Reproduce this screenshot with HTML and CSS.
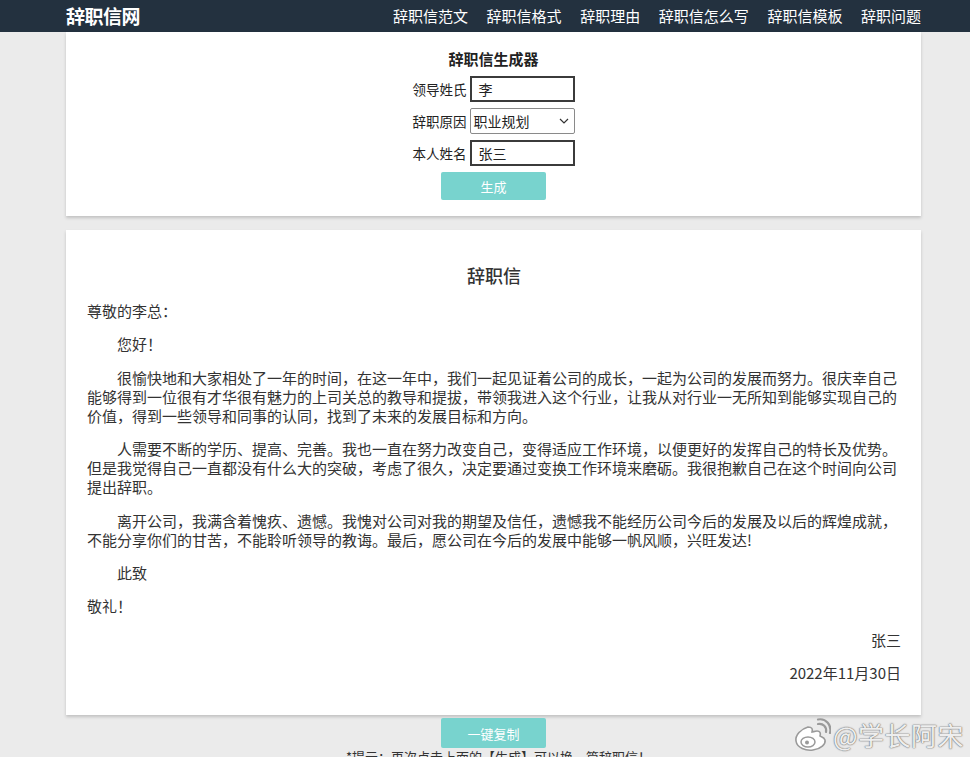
FILE: index.html
```html
<!DOCTYPE html>
<html lang="zh">
<head>
<meta charset="utf-8">
<title>辞职信网</title>
<link rel="stylesheet" href="styles.css">
</head>
<body>
<header class="topbar">
  <div class="topbar-inner">
    <div class="logo">辞职信网</div>
    <nav class="nav">
      <a>辞职信范文</a>
      <a>辞职信格式</a>
      <a>辞职理由</a>
      <a>辞职信怎么写</a>
      <a>辞职信模板</a>
      <a>辞职问题</a>
    </nav>
  </div>
</header>
<main class="wrap">
  <section class="card form-card">
    <h2 class="form-title">辞职信生成器</h2>
    <div class="row"><label>领导姓氏</label><div class="field input">李</div></div>
    <div class="row"><label>辞职原因</label><div class="field select">职业规划<svg class="caret" width="10" height="6" viewBox="0 0 10 6"><path d="M1 1 L5 5 L9 1" fill="none" stroke="#333" stroke-width="1.2"/></svg></div></div>
    <div class="row"><label>本人姓名</label><div class="field input">张三</div></div>
    <div class="btn-row"><button class="btn">生成</button></div>
  </section>
  <section class="card letter">
    <h1 class="letter-title">辞职信</h1>
    <p class="p-first">尊敬的李总：</p>
    <p class="ind">您好！</p>
    <p class="ind">很愉快地和大家相处了一年的时间，在这一年中，我们一起见证着公司的成长，一起为公司的发展而努力。很庆幸自己能够得到一位很有才华很有魅力的上司关总的教导和提拔，带领我进入这个行业，让我从对行业一无所知到能够实现自己的价值，得到一些领导和同事的认同，找到了未来的发展目标和方向。</p>
    <p class="ind">人需要不断的学历、提高、完善。我也一直在努力改变自己，变得适应工作环境，以便更好的发挥自己的特长及优势。但是我觉得自己一直都没有什么大的突破，考虑了很久，决定要通过变换工作环境来磨砺。我很抱歉自己在这个时间向公司提出辞职。</p>
    <p class="ind">离开公司，我满含着愧疚、遗憾。我愧对公司对我的期望及信任，遗憾我不能经历公司今后的发展及以后的辉煌成就，不能分享你们的甘苦，不能聆听领导的教诲。最后，愿公司在今后的发展中能够一帆风顺，兴旺发达!</p>
    <p class="ind">此致</p>
    <p>敬礼！</p>
    <p class="right">张三</p>
    <p class="right">2022年11月30日</p>
  </section>
  <div class="copy-row"><button class="btn copy">一键复制</button></div>
  <p class="tip">*提示：再次点击上面的【生成】可以换一篇辞职信！</p>
</main>
<div class="watermark">
  <svg width="38" height="34" viewBox="0 0 38 34">
    <path d="M15 9 C8 11 2 17 3 23 C4 30 13 33 20 32 C28 31 33 26 32 22 C31 19 28 19 27 18 C28 15 27 13 24 13 C22 13 20 14 19 14 C20 11 19 9 15 9 Z" fill="#fff" stroke="#9a9a9a" stroke-width="1.6"/>
    <ellipse cx="15" cy="24" rx="7" ry="5" fill="none" stroke="#9a9a9a" stroke-width="1.5"/>
    <circle cx="14" cy="24.5" r="2" fill="#9a9a9a"/>
    <path d="M25 6 C30 5 34 9 33 14" fill="none" stroke="#9a9a9a" stroke-width="2.2" stroke-linecap="round"/>
    <path d="M25 1.5 C33 0 39 7 37 15" fill="none" stroke="#9a9a9a" stroke-width="2.2" stroke-linecap="round"/>
  </svg>
  <span>@学长阿宋</span>
</div>
</body>
</html>
```
FILE: styles.css
```css
* { box-sizing: border-box; }
html, body { margin: 0; padding: 0; }
body {
  background: #ebebeb;
  font-family: "Noto Sans CJK SC", "Noto Sans", sans-serif;
  color: #333;
}
.topbar {
  background: #23313f;
  height: 32px;
}
.topbar-inner {
  width: 855px;
  margin-left: 66px;
  height: 32px;
  display: flex;
  align-items: center;
  justify-content: space-between;
}
.logo {
  color: #fff;
  font-size: 19px;
  font-weight: bold;
  line-height: 32px;
  letter-spacing: -0.5px;
}
.nav {
  display: flex;
  gap: 18.6px;
}
.nav a {
  color: #fff;
  font-size: 15px;
  line-height: 32px;
}
.wrap {
  width: 855px;
  margin-left: 66px;
}
.card {
  background: #fff;
  box-shadow: 0 2px 3px rgba(0,0,0,0.18);
}
.form-card {
  padding: 17px 0 16px;
  display: flex;
  flex-direction: column;
  align-items: center;
  gap: 6px;
}
.form-title {
  margin: 0 0 1px;
  font-size: 15px;
  font-weight: bold;
  line-height: 20px;
  color: #222;
}
.row {
  display: flex;
  align-items: center;
  gap: 3px;
}
.row label {
  font-size: 13.5px;
  color: #222;
  line-height: 26px;
}
.field {
  width: 105px;
  height: 26px;
  font-size: 14px;
  color: #222;
  display: flex;
  align-items: center;
  padding-left: 7px;
}
.input {
  border: 2px solid #3b3b3b;
}
.select {
  border: 1px solid #8a8a8a;
  border-radius: 2px;
  padding-left: 3px;
  justify-content: space-between;
  padding-right: 5px;
}
.btn-row { margin-top: 0; }
.btn {
  width: 105px;
  height: 28px;
  border: 0;
  border-radius: 2px;
  background: #78d3ce;
  color: #fff;
  font-family: inherit;
  font-size: 13px;
}
.letter {
  margin-top: 14px;
  padding: 30px 20px 33px 21px;
}
.letter-title {
  margin: 0 0 11px;
  text-align: center;
  font-size: 18px;
  font-weight: 500;
  color: #333;
  line-height: 30px;
}
.letter p {
  margin: 14.4px 0 0;
  font-size: 15px;
  line-height: 19px;
  color: #333;
}
.letter p.p-first { margin-top: 0; }
.letter p.ind { text-indent: 2em; }
.letter p.right { text-align: right; }
.copy-row {
  display: flex;
  justify-content: center;
  margin-top: 3px;
}
.copy { height: 30px; }
.tip {
  margin: 1px 0 0 280px;
  font-size: 13px;
  line-height: 16px;
  color: #333;
}
.watermark {
  position: absolute;
  left: 793px;
  top: 716px;
  display: flex;
  align-items: center;
  gap: 2px;
}
.watermark span {
  font-size: 26px;
  color: rgba(255,255,255,0.9);
  text-shadow: 0 0 1px #777, 0 0 1px #777, 0 0 2px #999;
  letter-spacing: 0.5px;
}
```
